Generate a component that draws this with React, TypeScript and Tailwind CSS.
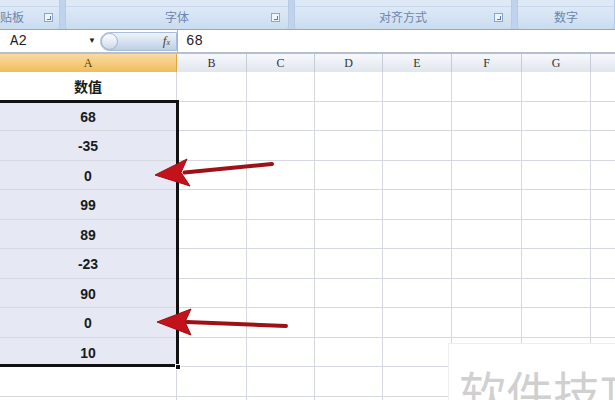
import React from "react";

const cols = ["A", "B", "C", "D", "E", "F", "G", "H"];
const values = ["68", "-35", "0", "99", "89", "-23", "90", "0", "10"];
const gridCols = "grid w-[660px] grid-cols-[177px_70px_68px_68px_69px_70px_69px_69px]";

const Launcher = () => (
    <span className="inline-block w-[9px] h-[9px] border border-[#8ba6c9] bg-[#eef4fb] relative">
        <span className="absolute right-[1px] bottom-[1px] w-[4px] h-[4px] border-r border-b border-[#5a7bab]"></span>
    </span>
);

const Group = ({ label, w, launcher = true }: { label: string; w: string; launcher?: boolean }) => (
    <div className={`${w} h-full flex flex-col rounded-b-[3px] border-x border-[#b7cbe6] bg-gradient-to-b from-[#e3edf8] to-[#cbdcf0]`}>
        <div className="h-[7px] bg-[#dfe9f6] border-b border-[#c8d8ec]"></div>
        <div className="flex-1 flex items-center relative">
            <span className="w-full text-center text-[12px] text-[#6b86ad]">{label}</span>
            {launcher && <span className="absolute right-[8px] top-[6px] flex"><Launcher /></span>}
        </div>
    </div>
);

const Arrow = ({ tip, tail, top, bottom }: { tip: [number, number]; tail: [number, number]; top: [number, number]; bottom: [number, number] }) => (
    <svg className="absolute left-0 top-0 pointer-events-none" width="615" height="400">
        <line x1={tail[0]} y1={tail[1]} x2={(top[0] + bottom[0]) / 2 - 4} y2={(top[1] + bottom[1]) / 2} stroke="#9e1217" strokeWidth="4" strokeLinecap="round" />
        <polygon points={`${tip[0]},${tip[1]} ${top[0]},${top[1]} ${top[0] - 6},${(top[1] + bottom[1]) / 2} ${bottom[0]},${bottom[1]}`} fill="#c4121a" stroke="#a10f15" strokeWidth="1" strokeLinejoin="round" />
    </svg>
);

export default function App() {
    return <div className="relative w-[615px] h-[400px] overflow-hidden bg-white font-['Liberation_Sans','Noto_Sans_CJK_SC',sans-serif]">
        {/* ribbon */}
        <div className="h-[30px] flex gap-[5px] bg-[#bfd3ec] border-b border-[#8fa9cc] -ml-[2px]">
            <div className="w-[62px] h-full flex flex-col rounded-b-[3px] border-r border-[#b7cbe6] bg-gradient-to-b from-[#e3edf8] to-[#cbdcf0]">
                <div className="h-[7px] bg-[#dfe9f6] border-b border-[#c8d8ec]"></div>
                <div className="flex-1 flex items-center relative">
                    <span className="pl-[2px] text-[12px] text-[#6b86ad]">贴板</span>
                    <span className="absolute right-[6px] top-[6px] flex"><Launcher /></span>
                </div>
            </div>
            <Group label="字体" w="w-[224px]" />
            <Group label="对齐方式" w="w-[218px]" />
            <Group label="数字" w="flex-1" launcher={false} />
        </div>

        {/* formula bar */}
        <div className="h-[24px] flex items-center bg-white border-b-2 border-[#b6bfcc]">
            <div className="w-[100px] h-full flex items-center justify-between pl-[10px] pr-[4px]">
                <span className="text-[14px] text-[#222] font-['Liberation_Mono',monospace]">A2</span>
                <span className="text-[8px] text-[#222]">▼</span>
            </div>
            <div className="w-[77px] h-[19px] flex items-center justify-between rounded-l-full bg-gradient-to-b from-[#eef3fa] via-[#d6e2f1] to-[#bccfe7] border border-[#a9bdd8]">
                <span className="w-[17px] h-[17px] rounded-full bg-gradient-to-b from-[#ffffff] to-[#cdd9e8] border border-[#9fb2cc]"></span>
                <span className="pr-[6px] text-[13px] italic text-[#444] font-['Liberation_Serif',serif]">f<span className="text-[8px]">x</span></span>
            </div>
            <div className="h-full w-[1px] bg-[#a8b4c4]"></div>
            <span className="pl-[8px] text-[14px] text-[#222] font-['Liberation_Mono',monospace]">68</span>
        </div>

        {/* column headers */}
        <div className={`${gridCols} h-[18px]`}>
            {cols.map((c) => (
                <div key={c} className={`flex items-center justify-center text-[12px] font-['Liberation_Serif',serif] border-r border-b ${c === "A" ? "bg-gradient-to-b from-[#f9dba1] to-[#f1bc5c] border-[#e0a640] text-[#5a3b00]" : "bg-gradient-to-b from-[#f7f9fc] to-[#e0e6ee] border-[#c4ccd8] text-[#333]"}`}>{c === "H" ? "" : c}</div>
            ))}
        </div>

        {/* cells */}
        <div className="relative">
            {["数值", ...values, "", ""].map((v, r) => (
                <div key={r} className={`${gridCols} h-[29.5px]`}>
                    {cols.map((c) => (
                        <div key={c} className={`flex items-center justify-center pt-[3px] border-r border-b border-[#d5d9df] ${c === "A" && r > 0 && r <= 9 ? "bg-[#e6e9f3]" : "bg-white"}`}>
                            {c === "A" && <span className="text-[14px] font-bold text-[#1a1a1a]">{v}</span>}
                        </div>
                    ))}
                </div>
            ))}
            {/* selection */}
            <div className="absolute left-[-4px] top-[28px] w-[183px] h-[267px] border-[3px] border-[#111]"></div>
            <div className="absolute left-[175px] top-[292px] w-[6px] h-[6px] bg-[#111] border border-white"></div>
        </div>

        {/* arrows */}
        <Arrow tip={[155, 175]} tail={[272, 164]} top={[187, 159]} bottom={[190, 186]} />
        <Arrow tip={[157, 322]} tail={[286, 326]} top={[191, 309]} bottom={[191, 335]} />

        {/* watermark */}
        <div className="absolute left-[448px] top-[343px] w-[170px] h-[60px] bg-white border-l border-t border-[#eeeeee]">
            <span className="absolute left-[10px] top-[23px] whitespace-nowrap text-[47px] leading-none text-[#d0d0d0] font-['Noto_Sans_CJK_SC',sans-serif]">软件技巧</span>
        </div>
    </div>
}
